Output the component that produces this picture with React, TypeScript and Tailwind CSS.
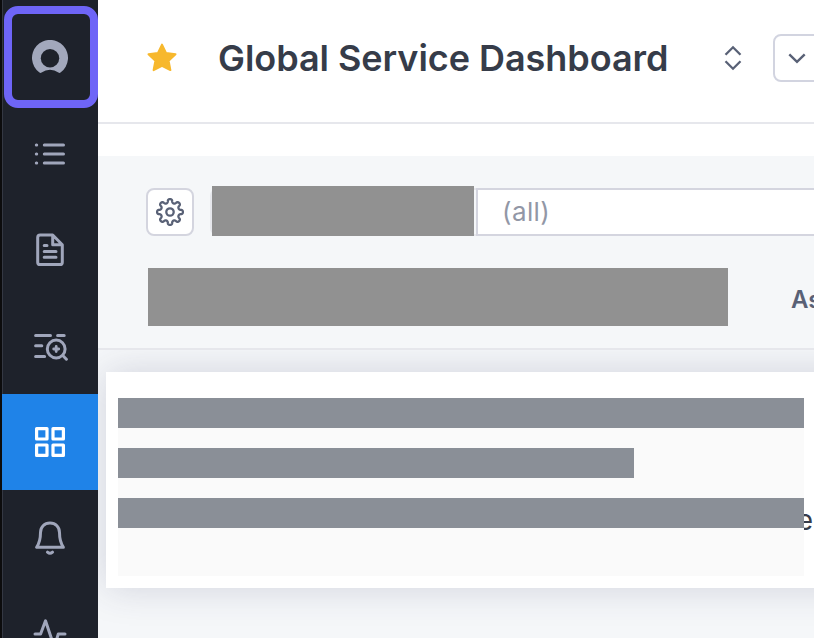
import type { ReactNode } from 'react';

interface NavItem {
  id: string;
  icon: ReactNode;
  active?: boolean;
}

const LogoIcon = () => (
  <svg width="36" height="36" viewBox="0 0 36 36" fill="none">
    <path
      d="M9.6 32.5Q8.4 33.4 7.2 32.3A18 18 0 1 1 28.8 32.3Q27.6 33.4 26.4 32.5Q22.6 29.7 18 29.7Q13.4 29.7 9.6 32.5Z"
      fill="#a2a8bc"
    />
    <circle cx="18" cy="18.3" r="9.2" fill="#1e222b" />
  </svg>
);

const ListIcon = () => (
  <svg width="36" height="36" viewBox="0 0 36 36" fill="none" stroke="#a0a6bb" strokeWidth="3" strokeLinecap="round">
    <path d="M12.3 9H31.5M12.3 18H31.5M12.3 27H31.5" />
    <path d="M4.3 9h.4M4.3 18h.4M4.3 27h.4" />
  </svg>
);

const DocumentIcon = () => (
  <svg width="36" height="36" viewBox="0 0 36 36" fill="none" stroke="#a0a6bb" strokeWidth="3" strokeLinecap="round" strokeLinejoin="round">
    <path d="M20.7 3H8.2Q5.7 3 5.7 5.5V30.2Q5.7 32.6 8.2 32.6H27.8Q30.3 32.6 30.3 30.2V12.7L20.7 3V12.7H30.3" />
    <path d="M12.2 13.5H15M12.2 19.5H24M12.2 25.3H24" />
  </svg>
);

const SearchListIcon = () => (
  <svg width="36" height="36" viewBox="0 0 36 36" fill="none" stroke="#a0a6bb" strokeWidth="3" strokeLinecap="round">
    <path d="M3.6 7.4H18.5M25.6 7.4H32.2M3.6 17.8H9.8M3.6 28.4H12.6" />
    <circle cx="24.2" cy="21" r="8.9" />
    <path d="M31 27.8L34.4 31.2" />
    <path d="M24.2 18.5V23.5M21.7 21H26.7" strokeWidth="2.8" />
  </svg>
);

const GridIcon = () => (
  <svg width="36" height="36" viewBox="0 0 36 36" fill="none" stroke="#fff" strokeWidth="3.2" strokeLinejoin="round">
    <rect x="4.6" y="4.6" width="10.4" height="10.4" />
    <rect x="21" y="4.6" width="10.4" height="10.4" />
    <rect x="4.6" y="21" width="10.4" height="10.4" />
    <rect x="21" y="21" width="10.4" height="10.4" />
  </svg>
);

const BellIcon = () => (
  <svg width="36" height="36" viewBox="0 0 36 36" fill="none" stroke="#a0a6bb" strokeWidth="3" strokeLinecap="round" strokeLinejoin="round">
    <path d="M18 3C12.3 3 8.5 7 8.5 12.5C8.5 20.5 7.3 23.3 4.6 27.3H31.4C28.7 23.3 27.5 20.5 27.5 12.5C27.5 7 23.7 3 18 3Z" />
    <path d="M15.5 32.2Q18 34.4 20.5 32.2" />
  </svg>
);

const PulseIcon = () => (
  <svg width="36" height="36" viewBox="0 0 36 36" fill="none" stroke="#a0a6bb" strokeWidth="3" strokeLinecap="round" strokeLinejoin="round">
    <path d="M3 18H8.6L13.5 4.8L22.3 31L26.3 18H33" />
  </svg>
);

// Eight evenly spaced teeth, the sin(16t) term rounds off tips and valleys
const gearPoints = Array.from({ length: 240 }, (_, i) => {
  const t = (i / 240) * Math.PI * 2;
  const radius = 11.1 + 1.8 * Math.cos(t * 8);
  const angle = t + 0.04 * Math.sin(t * 16);
  return `${(14 + radius * Math.cos(angle)).toFixed(2)},${(14 + radius * Math.sin(angle)).toFixed(2)}`;
}).join(' ');

const GearIcon = () => (
  <svg width="28" height="28" viewBox="0 0 28 28" fill="none" stroke="#596176" strokeWidth="2.3" strokeLinejoin="round">
    <polygon points={gearPoints} />
    <circle cx="14" cy="14" r="3.7" />
  </svg>
);

const navItems: NavItem[] = [
  { id: 'home', icon: <LogoIcon /> },
  { id: 'list', icon: <ListIcon /> },
  { id: 'reports', icon: <DocumentIcon /> },
  { id: 'explore', icon: <SearchListIcon /> },
  { id: 'dashboards', icon: <GridIcon />, active: true },
  { id: 'alerts', icon: <BellIcon /> },
  { id: 'activity', icon: <PulseIcon /> },
];

const Sidebar = () => (
  <aside className="relative h-full w-[98px] shrink-0 overflow-hidden border-l-2 border-[#0c0c0d] bg-[#1e222b] pt-[10px]">
    <div className="absolute inset-y-0 left-0 w-px bg-[#343843]" />
    <nav className="relative flex flex-col">
      {navItems.map((item) => (
        <button
          key={item.id}
          className={`flex h-24 w-24 shrink-0 items-center justify-center ${item.active ? 'bg-[#1f83e8]' : ''}`}
        >
          {item.icon}
        </button>
      ))}
    </nav>
    {/* Focus ring around the home item */}
    <div className="absolute left-[2px] top-[6px] h-[102px] w-[94px] rounded-[14px] border-8 border-[#6e65f7]" />
  </aside>
);

const Header = () => (
  <header className="flex h-[124px] shrink-0 items-start border-b-2 border-[#e6e7ec] pl-12 pt-[34px]">
    <div className="flex h-12 shrink-0 items-center">
      <svg width="32" height="32" viewBox="0 0 32 32">
        <path
          d="M16 2.6L20.1 11.1L29.5 12.3L22.6 18.8L24.4 28.1L16 23.8L7.6 28.1L9.4 18.8L2.5 12.3L11.9 11.1Z"
          fill="#f7b82d"
          stroke="#f7b82d"
          strokeWidth="2"
          strokeLinejoin="round"
        />
      </svg>
      <h1 className="ml-10 w-[505px] whitespace-nowrap text-[36px] font-semibold leading-[48px] tracking-[-0.05px] text-[#363c49]">
        Global Service Dashboard
      </h1>
      <svg width="20" height="28" viewBox="0 0 20 28" fill="none" stroke="#596176" strokeWidth="2.3">
        <path d="M2.5 10.8L10 3.3L17.5 10.8M2.5 17.2L10 24.7L17.5 17.2" />
      </svg>
    </div>
    <button className="ml-[30px] flex h-12 w-[60px] shrink-0 items-center rounded-lg border-2 border-[#d2d4e0] pl-[12px]">
      <svg width="20" height="20" viewBox="0 0 20 20" fill="none" stroke="#596176" strokeWidth="2.4">
        <path d="M2.3 6.3L10 13.8L17.7 6.3" />
      </svg>
    </button>
  </header>
);

const FilterBar = () => (
  <section className="mt-8 h-[194px] shrink-0 border-b-2 border-[#e6e7ec] bg-[#f5f7f9] pt-[30px]">
    <div className="flex h-[50px] items-end pl-12">
      <button className="flex h-12 w-12 shrink-0 items-center justify-center rounded-lg border-2 border-[#d4d5df] bg-white">
        <GearIcon />
      </button>
      <div className="ml-4 flex h-12 shrink-0 items-end rounded-l-lg border-y-2 border-l-2 border-[#e6e7ec]">
        <div className="-mb-[2px] h-[50px] w-[262px] bg-[#919191]" />
        <div className="w-[2px]" />
      </div>
      <div className="flex h-12 w-[400px] shrink-0 items-center border-2 border-[#d4d5df] bg-white pb-[2px] pl-[24px] text-[26px] tracking-[0.4px] text-[#9297a6]">
        (all)
      </div>
    </div>
    <div className="mt-8 flex h-[58px] items-center pl-[50px]">
      <div className="h-[58px] w-[580px] shrink-0 bg-[#919191]" />
      <span className="ml-[63px] mt-[6px] whitespace-nowrap text-[24px] font-semibold text-[#596176]">As</span>
    </div>
  </section>
);

const Panel = () => (
  <section className="ml-2 mt-[22px] flex h-[216px] w-[760px] shrink-0 bg-white pl-3 pt-[26px] shadow-[0_0_36px_rgba(50,50,93,0.18)]">
    <div className="flex h-[178px] w-[686px] shrink-0 flex-col gap-5 bg-[#fafafa]">
      <div className="h-[30px] bg-[#8a8f97]" />
      <div className="h-[30px] w-[516px] bg-[#8a8f97]" />
      <div className="h-[30px] bg-[#8a8f97]" />
    </div>
    <div className="flex w-[9px] justify-end overflow-hidden pt-[102px] text-[28px] leading-[40px] text-[#363c49]">
      e
    </div>
  </section>
);

export default function App() {
  return (
    <div className="flex h-[638px] w-[814px] overflow-hidden bg-white font-['Inter','Liberation_Sans',sans-serif]">
      <div className="relative z-10 flex shrink-0">
        <Sidebar />
      </div>
      <main className="flex min-w-0 flex-1 flex-col overflow-hidden">
        <Header />
        <FilterBar />
        <div className="flex-1 overflow-hidden bg-[#f5f7f9]">
          <Panel />
        </div>
      </main>
    </div>
  );
}
